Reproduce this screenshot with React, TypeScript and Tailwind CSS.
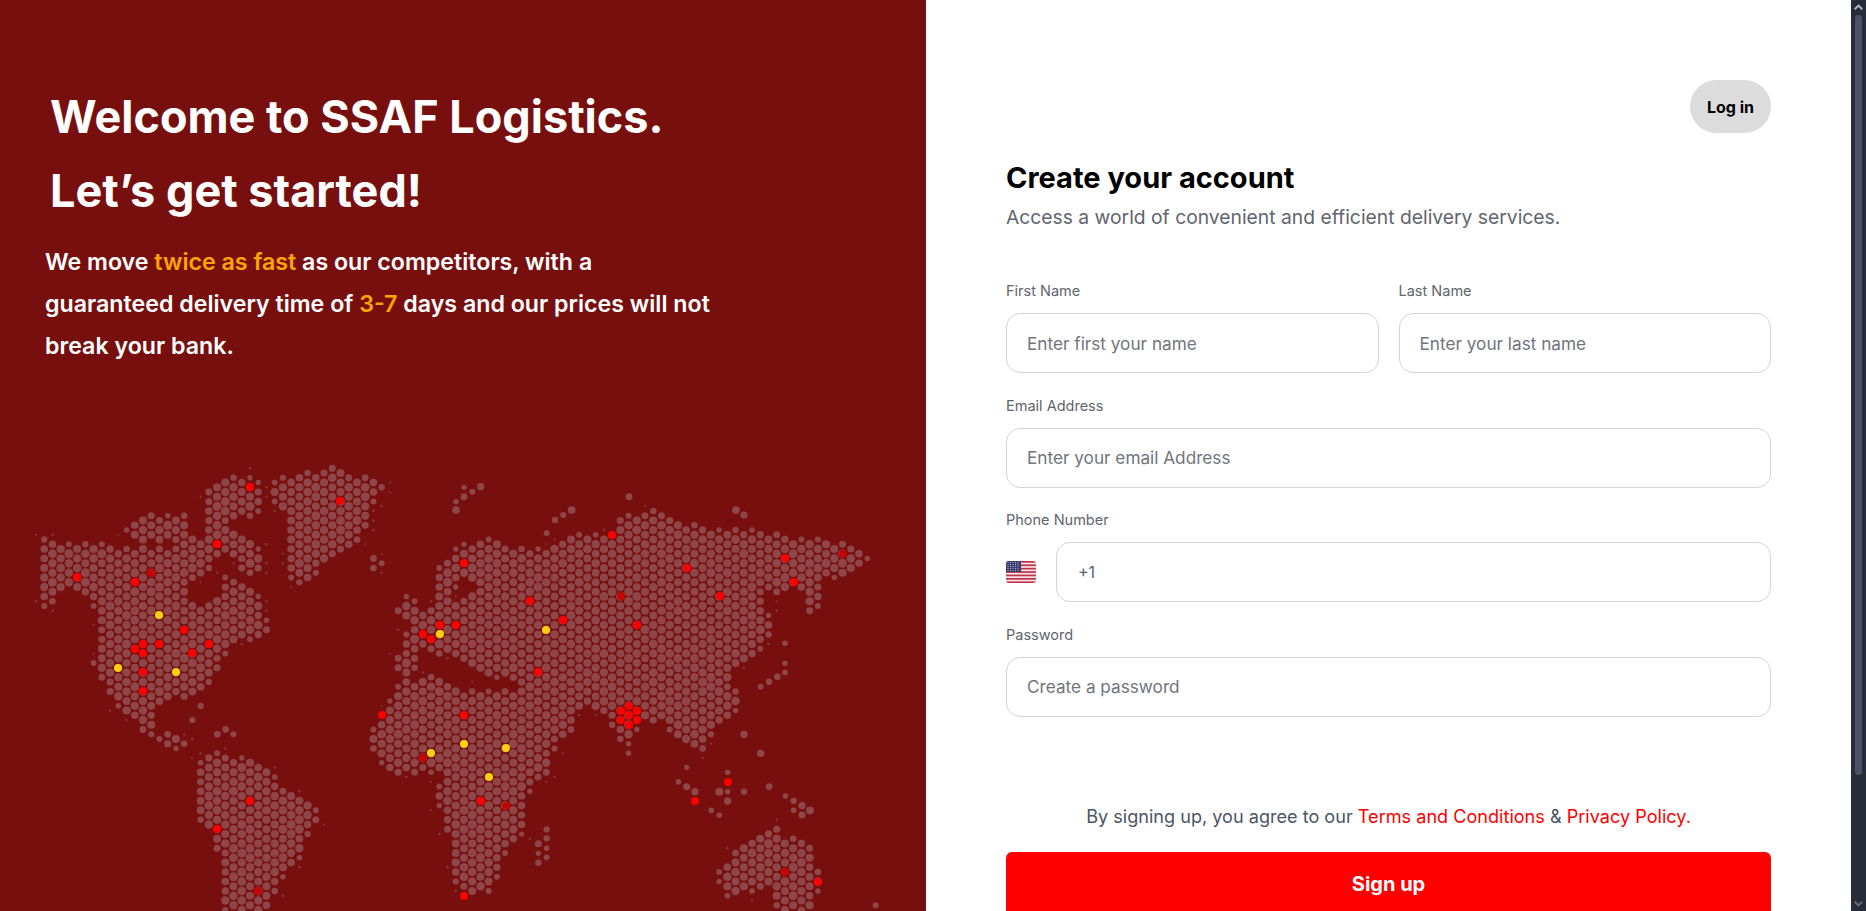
type Pt = [number, number];

// helpers for reading map coords off 3x crops
const a = (x: number, y: number): Pt => [x / 3, 450 + y / 3];
const b = (x: number, y: number): Pt => [450 + x / 3, 450 + y / 3];

const land: Pt[][] = [
  // north america
  [a(120,262),a(210,272),a(300,280),a(430,290),a(500,300),a(580,260),a(640,290),a(665,320),a(640,350),a(570,390),a(565,430),a(600,460),a(650,450),a(670,375),a(720,400),a(785,440),a(790,490),a(810,510),a(835,555),a(800,545),a(750,570),a(700,590),a(660,640),a(640,700),a(600,725),a(540,750),a(470,760),a(460,800),a(470,850),a(520,840),a(565,890),a(545,915),a(480,875),a(420,835),a(390,790),a(340,770),a(310,700),a(280,640),a(285,500),a(260,450),a(205,400),a(170,420),a(155,470),a(125,470)],
  [a(370,240),a(430,200),a(500,185),a(560,190),a(560,280),a(420,280)],
  [a(618,120),a(680,75),a(790,75),a(795,195),a(700,205),a(618,195)],
  [a(618,190),a(700,190),a(700,260),a(618,260)],
  [a(618,230),a(700,250),a(795,300),a(785,378),a(720,378),a(700,330),a(660,300),a(618,280)],
  // greenland, iceland
  [a(812,90),a(1020,50),a(1160,105),a(1115,170),a(1105,240),a(1065,285),a(995,325),a(935,385),a(895,410),a(862,385),a(862,230),a(848,195),a(812,175)],
  [a(1090,335),a(1120,320),a(1155,340),a(1120,360)],
  // south america
  [a(595,935),a(650,900),a(760,935),a(830,980),a(860,1030),a(960,1075),a(960,1110),a(925,1150),a(905,1230),a(850,1290),a(825,1330),a(800,1400),a(670,1400),a(670,1240),a(630,1150),a(595,1110),a(590,1020),a(600,960)],
  // africa
  [a(1110,840),a(1150,760),a(1190,700),a(1290,675),b(0,715),b(100,722),b(190,718),b(240,760),b(375,830),b(340,860),b(300,920),b(300,970),b(240,1030),b(225,1090),b(225,1150),b(160,1230),b(130,1320),b(60,1350),b(30,1340),b(10,1270),b(-10,1150),a(1340,1190),a(1360,1300),a(1310,1040),a(1320,980),a(1230,980),a(1160,960),a(1110,890)],
  // eurasia
  [a(1210,545),a(1240,500),a(1295,470),a(1295,390),a(1320,345),a(1385,275),b(120,260),b(170,290),b(240,300),b(340,280),b(390,250),b(480,240),b(520,200),b(610,170),b(680,200),b(760,235),b(900,230),b(1000,260),b(1130,270),b(1210,290),b(1255,320),b(1250,355),b(1180,375),b(1100,400),b(1030,420),b(940,430),b(930,460),b(975,480),b(970,550),b(920,610),b(860,640),b(830,660),b(870,720),b(860,790),b(790,830),b(770,920),b(720,900),b(670,870),b(640,820),b(580,810),b(560,840),b(550,910),b(530,915),b(490,860),b(470,810),b(420,780),b(375,780),b(375,830),b(340,860),b(230,860),b(190,695),b(170,688),b(100,685),b(70,650),b(50,625),b(0,625),a(1290,610),a(1210,590)],
  // iberia, uk, kamchatka, australia
  [a(1185,620),a(1250,595),a(1260,680),a(1190,665)],
  [a(1215,425),a(1250,450),a(1255,505),a(1190,490)],
  [b(1070,410),b(1115,410),b(1115,475),b(1070,490)],
  [b(800,1265),b(860,1200),b(930,1155),b(980,1130),b(985,1170),b(1050,1150),b(1080,1190),b(1115,1290),b(1100,1340),b(1085,1400),b(990,1400),b(960,1310),b(880,1330),b(830,1345),b(800,1300)],
];

const holes: Pt[][] = [
  [b(30,385),b(80,405),b(60,430),b(30,465),b(0,440),b(30,410)],
];

const islands: Pt[] = [
  b(290,250),b(315,210),b(340,195),b(365,180),b(537,140),b(858,180),b(882,195),
  b(18,155),b(18,180),b(42,112),b(67,125),b(92,110),b(42,140),
  b(1005,580),b(1005,640),b(1005,667),b(982,680),b(957,695),b(932,710),
  b(710,952),b(685,995),b(710,1010),b(735,1025),b(784,1081),b(808,1095),
  b(833,967),b(808,1025),b(833,1025),b(833,1053),b(882,1025),b(882,853),b(932,910),
  b(957,1010),b(1006,1038),b(1031,1053),b(1056,1067),b(1080,1081),b(1031,1081),b(1056,1095),
  b(290,1138),b(290,1165),b(265,1181),b(290,1195),b(265,1210),b(290,1222),b(265,1238),b(1277,1366),
  a(577,810),a(602,768),a(677,838),a(700,853),a(652,853),
];

const redDots: Pt[] = [
  [250,487],[340,501],[217,544],[77,577],[135,582],[184,630],[143,644],[159,644],[209,644],[135,649],[143,653],[192,653],[143,672],[143,691],[382,715],[423,634],[431,639],[440,625],[456,625],[464,563],[464,715],[250,801],[217,829],[464,896],
  [612,535],[687,568],[785,558],[794,582],[720,596],[530,601],[563,620],[637,625],[538,672],[629,706],[621,711],[637,711],[629,715],[621,720],[637,720],[629,725],[481,801],[728,782],[695,801],[818,882],
];
const darkDots: Pt[] = [[151,573],[423,758],[258,891],[843,554],[621,596],[506,806],[785,872]];
const yellowDots: Pt[] = [[159,615],[118,668],[176,672],[440,634],[431,753],[464,744],[546,630],[506,748],[489,777]];

function inPoly(x: number, y: number, poly: Pt[]) {
  let inside = false;
  for (let i = 0, j = poly.length - 1; i < poly.length; j = i++) {
    const [xi, yi] = poly[i];
    const [xj, yj] = poly[j];
    if (yi > y !== yj > y && x < ((xj - xi) * (y - yi)) / (yj - yi) + xi) inside = !inside;
  }
  return inside;
}

const isLand = (x: number, y: number) =>
  land.some((p) => inPoly(x, y, p)) && !holes.some((p) => inPoly(x, y, p));

const noise = (i: number, j: number) => {
  const s = Math.sin(i * 12.9898 + j * 78.233) * 43758.5453;
  return s - Math.floor(s);
};

function buildDots() {
  const dots: { x: number; y: number; r: number; o: number }[] = [];
  const dx = 8.23;
  const dy = 4.75;
  for (let i = -17; i < 100; i++) {
    for (let j = -42; j < 58; j++) {
      if ((i + j) % 2 !== 0) continue;
      const x = 143 + i * dx;
      const y = 644 + j * dy;
      const around: Pt[] = [[x, y - 2 * dy], [x, y + 2 * dy], [x - dx, y - dy], [x - dx, y + dy], [x + dx, y - dy], [x + dx, y + dy]];
      const n = around.filter(([px, py]) => isLand(px, py)).length;
      const k = noise(i, j);
      if (isLand(x, y)) {
        const r = n === 6 ? 3.9 + k * 0.6 : n >= 4 ? 3.5 + k * 0.7 : 2.6 + k;
        dots.push({ x, y, r, o: 1 });
      } else if (n > 0 && k < 0.18) {
        dots.push({ x, y, r: 1 + k * 2, o: 0.7 });
      }
    }
  }
  islands.forEach(([x, y], idx) => dots.push({ x, y, r: 2.6 + noise(idx, 3) * 1.4, o: 1 }));
  return dots;
}

const dots = buildDots();

function WorldMap() {
  return (
    <svg viewBox="0 450 926 461" className="block h-[461px] w-[926px] shrink-0">
      {dots.map((d, i) => (
        <circle key={i} cx={d.x} cy={d.y} r={d.r} fill="#8f4649" opacity={d.o} />
      ))}
      {redDots.map(([x, y], i) => (
        <circle key={i} cx={x} cy={y} r={4} fill="#fa0000" />
      ))}
      {darkDots.map(([x, y], i) => (
        <circle key={i} cx={x} cy={y} r={4} fill="#c40505" />
      ))}
      {yellowDots.map(([x, y], i) => (
        <circle key={i} cx={x} cy={y} r={4} fill="#fdd00f" />
      ))}
    </svg>
  );
}

function UsFlag() {
  return (
    <svg viewBox="0 0 30 22" className="h-[22px] w-[30px] shrink-0">
      <defs>
        <clipPath id="flag">
          <rect width="30" height="22" rx="3" />
        </clipPath>
      </defs>
      <g clipPath="url(#flag)">
        <rect width="30" height="22" fill="#f6e6e8" />
        {[0, 3.4, 6.8, 10.2, 13.6, 17, 20.4].map((y) => (
          <rect key={y} y={y} width="30" height="1.7" fill="#c1334a" />
        ))}
        <rect width="15" height="11" fill="#3c3b6e" />
        {[1.5, 3.5, 5.5, 7.5, 9.5].map((y) =>
          [2, 4.5, 7, 9.5, 12].map((x) => (
            <circle key={x + "-" + y} cx={x} cy={y} r="0.55" fill="#c9c9dc" />
          ))
        )}
      </g>
    </svg>
  );
}

function Field({ label, placeholder }: { label: string; placeholder: string }) {
  return (
    <div className="flex min-w-0 flex-1 flex-col">
      <label className="h-[22px] text-[14.5px] leading-[22px] text-[#60656e]">{label}</label>
      <input
        placeholder={placeholder}
        className="mt-[11px] h-[60px] w-full rounded-[14px] border border-[#d4d4d4] bg-white px-5 text-[17.2px] outline-none placeholder:text-[#70757d]"
      />
    </div>
  );
}

function Scrollbar() {
  return (
    <div className="flex h-full w-[15px] shrink-0 flex-col items-center bg-[#282c38]">
      <svg viewBox="0 0 12 8" className="mt-[4px] h-[6px] w-[9px] shrink-0" fill="none" stroke="#b9b9c2" strokeWidth="2.4">
        <path d="M1 7 6 2l5 5" />
      </svg>
      <div className="mt-[5px] h-[760px] w-[7px] shrink-0 rounded-[3px] bg-[#4d4e68]" />
      <svg viewBox="0 0 12 8" className="mt-auto mb-[4px] h-[6px] w-[9px] shrink-0" fill="none" stroke="#6a6a72" strokeWidth="2.4">
        <path d="M1 1l5 5 5-5" />
      </svg>
    </div>
  );
}

export default function App() {
  return (
    <div className="flex h-screen w-full overflow-hidden bg-white font-['Inter',sans-serif]">
      <section className="flex h-full w-[926px] shrink-0 flex-col overflow-hidden bg-[#780f0f] text-white">
        <div className="flex h-[450px] shrink-0 flex-col pt-[80px] pl-[45px]">
          <h1 className="pl-[5px] text-[45px] leading-[74px] font-bold">
            Welcome to SSAF Logistics.
            <br />
            Let’s get started!
          </h1>
          <p className="mt-[13px] w-[672px] text-[23.2px] leading-[42px] font-semibold">
            We move <span className="text-[#ffa500]">twice as fast</span> as our competitors, with a guaranteed delivery time of <span className="text-[#ffa500]">3-7</span> days and our prices will not break your bank.
          </p>
        </div>
        <WorldMap />
      </section>

      <main className="flex h-full min-w-0 flex-1 flex-col overflow-hidden px-[80px] pt-[80px]">
        <div className="flex justify-end">
          <button className="h-[53px] w-[81px] rounded-full bg-[#dcdcdc] text-[16px] font-bold text-black">Log in</button>
        </div>
        <h2 className="mt-[25px] text-[29px] leading-[40px] font-bold text-black">Create your account</h2>
        <p className="mt-[3px] text-[19.3px] leading-[32px] text-[#60656e]">Access a world of convenient and efficient delivery services.</p>

        <div className="mt-[47px] flex flex-col gap-[21.5px]">
          <div className="flex gap-[20px]">
            <Field label="First Name" placeholder="Enter first your name" />
            <Field label="Last Name" placeholder="Enter your last name" />
          </div>
          <Field label="Email Address" placeholder="Enter your email Address" />
          <div className="flex flex-col">
            <label className="h-[22px] text-[14.5px] leading-[22px] text-[#60656e]">Phone Number</label>
            <div className="mt-[11px] flex items-center gap-[20px]">
              <UsFlag />
              <input
                defaultValue="+1"
                className="h-[60px] min-w-0 flex-1 rounded-[14px] border border-[#d4d4d4] bg-white px-[21px] text-[16px] text-[#5b6270] outline-none"
              />
            </div>
          </div>
          <Field label="Password" placeholder="Create a password" />
        </div>

        <p className="mt-[85px] text-center text-[18.1px] leading-[28px] text-[#4b5563]">
          By signing up, you agree to our <span className="text-[#ff0000]">Terms and Conditions</span> &amp; <span className="text-[#ff0000]">Privacy Policy.</span>
        </p>
        <button className="mt-[22px] h-[64px] w-full shrink-0 rounded-[6px] bg-[#ff0000] text-[20px] font-bold text-white">Sign up</button>
      </main>

      <Scrollbar />
    </div>
  );
}
